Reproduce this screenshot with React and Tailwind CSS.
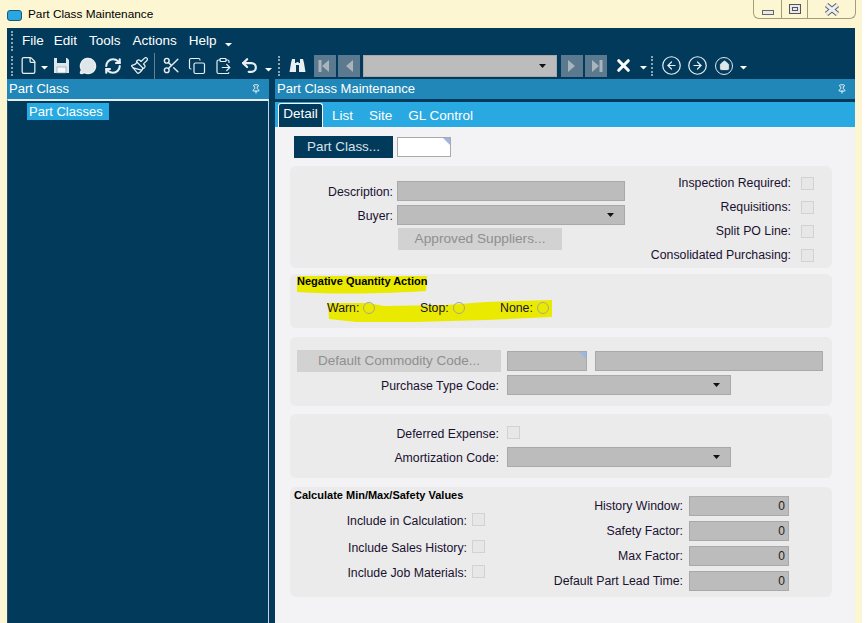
import { File, MessageCircle, RefreshCw, Paintbrush, Scissors, Copy, ClipboardPaste, Undo2, CircleArrowLeft, CircleArrowRight, House, Pin, X } from 'lucide-react';

const Caret = () => (
  <svg width="7" height="5" viewBox="0 0 7 5" className="self-end mb-0.5 shrink-0">
    <path d="M0 1h7L3.5 4.5z" fill="#fff" />
  </svg>
);

const Grip = ({ className = '' }) => (
  <div className={`w-0.5 h-5 shrink-0 border-l-2 border-dotted border-[#8fa3b3] ${className}`}></div>
);

const NavButton = ({ flip, bar }) => (
  <div className="w-[22px] h-[22px] bg-[#5b7a90] flex items-center justify-center shrink-0">
    <svg width="14" height="14" viewBox="0 0 14 14" className={flip ? '-scale-x-100' : ''}>
      <path d="M3 1l7 6-7 6z" fill="#aab4ba" />
      {bar && <rect x="10.5" y="1" width="3" height="12" fill="#aab4ba" />}
    </svg>
  </div>
);

const Check = () => <div className="w-[13px] h-[13px] bg-[#e7e7e7] border border-[#d2d2d2] shrink-0"></div>;

const Label = ({ children, className = '' }) => (
  <span className={`text-[12.3px] leading-none text-[#1a1030] whitespace-nowrap text-right ${className}`}>{children}</span>
);

const Field = ({ className = '', dropdown, value, corner }) => (
  <div className={`relative bg-[#bcbcbc] border border-[#a9a9a9] flex items-center justify-end shrink-0 ${className}`}>
    {dropdown && (
      <svg width="7" height="4" viewBox="0 0 7 4" className="mr-2.5"><path d="M0 0h7L3.5 4z" fill="#111" /></svg>
    )}
    {value && <span className="text-[12px] text-[#222] mr-[3px]">{value}</span>}
    {corner && <div className="absolute top-0 right-0 w-0 h-0 border-t-[7px] border-l-[7px] border-t-[#9db8de] border-l-transparent"></div>}
  </div>
);

const Row = ({ label, width, gap = 'gap-[4px]', className = '', children }) => (
  <div className={`flex items-center ${gap} ${className}`}>
    <div className={`${width} text-right shrink-0 leading-none`}><Label>{label}</Label></div>
    {children}
  </div>
);

const Group = ({ className = '', children }) => (
  <div className={`bg-[#ebebeb] rounded-md ml-[15px] w-[542px] ${className}`}>{children}</div>
);

const Highlight = () => (
  <svg width="270" height="50" viewBox="0 0 270 50" className="absolute left-[6px] -top-[1px] pointer-events-none">
    <path d="M1 3H131L130 18C100 20 50 22 1 19z" fill="#eaea00" />
    <path d="M32 30H72L88 33 150 32 190 29 256 27 256 44 190 47 120 49 60 49 33 46z" fill="#eaea00" />
  </svg>
);

export default function App() {
  return (
    <div className="relative w-[865px] h-[623px] overflow-hidden bg-[#fdf6d2] border-r-[3px] border-white font-['Liberation_Sans',Arial,sans-serif] flex flex-col">
      <div className="h-7 flex shrink-0 justify-between pl-[7px]">
        <div className="flex items-center gap-[6px] pt-0.5">
          <div className="w-[15px] h-[11px] rounded-[3px] bg-[#2aa7df] border border-[#145a85] shrink-0"></div>
          <span className="text-[11.8px] text-black">Part Class Maintenance</span>
        </div>
        <div className="flex h-[19px] mr-[6px] border border-t-0 border-[#a39d7c] rounded-b-md">
          <div className="w-[28px] flex items-center justify-center border-r border-[#a39d7c]">
            <div className="w-[12px] h-[5px] mt-1.5 bg-[#e8e8ee] border border-[#666]"></div>
          </div>
          <div className="w-[26px] flex items-center justify-center border-r border-[#a39d7c]">
            <div className="w-[12px] h-[10px] bg-[#e8e8ee] border border-[#555] flex items-center justify-center">
              <div className="w-[6px] h-[4px] border border-[#555]"></div>
            </div>
          </div>
          <div className="w-[47px] flex items-center justify-center">
            <svg width="16" height="13" viewBox="0 0 16 13">
              <path d="M2.500 2l11 9M13.500 2l-11 9" stroke="#5c6068" strokeWidth="5" />
              <path d="M2.500 2l11 9M13.500 2l-11 9" stroke="#eceef2" strokeWidth="3" />
            </svg>
          </div>
        </div>
      </div>

      <div className="flex-1 ml-[7px] mr-[7px] bg-[#023a5c] flex flex-col min-h-0">
        <div className="h-6 flex items-center pl-1 gap-3 text-white text-[13.5px] shrink-0 pt-0.5">
          <Grip className="h-4 mr-[-3px]" />
          <span>File</span>
          <span className="-ml-0.5">Edit</span>
          <span>Tools</span>
          <span>Actions</span>
          <span>Help</span>
          <div className="-ml-1 h-4 flex"><Caret /></div>
        </div>

        <div className="h-[27px] flex items-center pl-1 text-[#e8eef2] shrink-0">
          <Grip />
          <File size={19} className="ml-[6px] shrink-0" strokeWidth={1.6} />
          <div className="ml-[3px] h-3 flex"><Caret /></div>
          <svg width="17" height="17" viewBox="0 0 17 17" className="ml-[5px] mr-[1px] shrink-0">
            <path d="M1 1h13l2 2v13H1z" fill="#dfe6ea" />
            <rect x="4" y="1" width="9" height="5" fill="#023a5c" />
            <rect x="4" y="10" width="9" height="6" fill="#f6f8f9" stroke="#7d97a8" strokeWidth=".6" />
          </svg>
          <MessageCircle size={18} className="ml-[8px] shrink-0" fill="#dfe6ea" />
          <RefreshCw size={18} className="ml-[7px] shrink-0" strokeWidth={2.8} />
          <Paintbrush size={19} className="ml-[8px] shrink-0" strokeWidth={1.6} />
          <div className="ml-[5px] w-px h-[26px] bg-[#66808f] shrink-0"></div>
          <Scissors size={19} className="ml-[7px] shrink-0" strokeWidth={1.8} />
          <Copy size={18} className="ml-[7px] shrink-0" strokeWidth={1.6} />
          <ClipboardPaste size={18} className="ml-[8px] shrink-0" strokeWidth={1.6} />
          <Undo2 size={19} className="ml-[8px] shrink-0" strokeWidth={2.8} />
          <div className="ml-[6px] h-4 flex"><Caret /></div>
          <Grip className="ml-[6px]" />
          <svg width="17" height="15" viewBox="0 0 17 15" className="ml-[9px] shrink-0">
            <path d="M2 5l1-4h3v4h1.500v-1h2v1H11V1h3l1 4 1.500 9h-6.500V7H7v7H.500z" fill="#e8eef2" />
          </svg>
          <div className="ml-2 flex gap-[2px]">
            <NavButton flip bar />
            <NavButton flip />
          </div>
          <Field dropdown className="ml-[3px] w-[194px] h-[22px]" />
          <div className="ml-[4px] flex gap-[2px]">
            <NavButton />
            <NavButton bar />
          </div>
          <X size={19} className="ml-[7px] text-white shrink-0" strokeWidth={4} />
          <div className="ml-[7px] h-3 flex"><Caret /></div>
          <Grip className="ml-1" />
          <CircleArrowLeft size={21} className="ml-[8px] shrink-0" strokeWidth={1.4} />
          <CircleArrowRight size={21} className="ml-[5px] shrink-0" strokeWidth={1.4} />
          <div className="ml-[7px] w-[18px] h-[18px] rounded-full border border-[#dfe6ea] flex items-center justify-center shrink-0">
            <House size={11} fill="#dfe6ea" strokeWidth={1.6} />
          </div>
          <div className="ml-[7px] h-3 flex"><Caret /></div>
        </div>

        <div className="flex-1 flex min-h-0">
          <div className="w-[262px] shrink-0 flex flex-col">
            <div className="h-5 bg-[#2087b8] text-white text-[13px] flex items-center justify-between pl-[2px] pr-[8px] shrink-0">
              <span>Part Class</span>
              <Pin size={10} strokeWidth={2.2} />
            </div>
            <div className="flex-1 border-t-2 border-t-[#e9eef1] border-r border-r-[#c9d3d9] border-l border-l-[#23506e] pl-[19px] pt-[2px]">
              <div className="w-fit bg-[#29a9e1] text-white text-[13px] leading-[17px] pl-0.5 pr-1.5">Part Classes</div>
            </div>
          </div>

          <div className="ml-[6px] flex-1 flex flex-col min-w-0">
            <div className="h-5 bg-[#2087b8] text-white text-[13px] flex items-center justify-between pl-[2px] pr-[8px] shrink-0">
              <span>Part Class Maintenance</span>
              <Pin size={10} strokeWidth={2.2} />
            </div>
            <div className="h-[25px] mt-[3px] bg-[#29a9e1] flex items-end pl-[3px] text-white text-[13.5px] shrink-0">
              <div className="h-[24px] w-[45px] bg-[#023a5c] border border-b-0 border-white rounded-t-[3px] flex items-center justify-center pb-[3px]">Detail</div>
              <span className="ml-[9px] mb-[1px]">List</span>
              <span className="ml-[16px] mb-[1px]">Site</span>
              <span className="ml-[16px] mb-[1px]">GL Control</span>
            </div>

            <div className="flex-1 bg-[#f3f3f6] flex flex-col min-h-0">
              <div className="flex items-center ml-[19px] mt-[9px] h-[22px] shrink-0">
                <div className="w-[99px] h-[22px] bg-[#023a5c] text-[#d8e2e8] text-[13.4px] flex items-center justify-center">Part Class...</div>
                <div className="relative ml-[4px] w-[54px] h-[20px] bg-white border border-[#a9a9a9]">
                  <div className="absolute top-0 right-0 w-0 h-0 border-t-[7px] border-l-[7px] border-t-[#9db8de] border-l-transparent"></div>
                </div>
              </div>

              <Group className="mt-[8px] h-[102px] shrink-0 flex justify-between pt-[15px]">
                <div className="flex flex-col gap-1">
                  <Row label="Description:" width="w-[103px]"><Field className="w-[228px] h-5" /></Row>
                  <Row label="Buyer:" width="w-[103px]"><Field dropdown className="w-[228px] h-5" /></Row>
                  <div className="ml-[108px] -mt-[1px] w-[164px] h-[22px] bg-[#d2d2d2] text-[#8f8f8f] text-[13.7px] flex items-center justify-center">Approved Suppliers...</div>
                </div>
                <div className="flex flex-col gap-[11px] pr-[18px] items-end -mt-[4px]">
                  {['Inspection Required:', 'Requisitions:', 'Split PO Line:', 'Consolidated Purchasing:'].map((l) => (
                    <div key={l} className="flex items-center gap-[10px] h-[13px]">
                      <Label>{l}</Label>
                      <Check />
                    </div>
                  ))}
                </div>
              </Group>

              <Group className="relative mt-[6px] h-[54px] shrink-0 pl-[7px]">
                <Highlight />
                <div className="relative text-[11px] font-bold text-black leading-[14px]">Negative Quantity Action</div>
                <div className="relative flex items-center mt-[13px] ml-[30px] h-3.5">
                  {['Warn:', 'Stop:', 'None:'].map((l, i) => (
                    <div key={l} className={`flex items-center gap-[4px] ${i === 0 ? 'w-[93px]' : i === 1 ? 'w-[80px]' : ''}`}>
                      <Label>{l}</Label>
                      <div className="w-3 h-3 rounded-full border border-[#a9a98a]"></div>
                    </div>
                  ))}
                </div>
              </Group>

              <Group className="mt-[9px] h-[69px] shrink-0 pt-[13px] pl-[7px]">
                <div className="flex items-center">
                  <div className="w-[204px] h-[22px] bg-[#d2d2d2] text-[#8f8f8f] text-[13.5px] flex items-center justify-center">Default Commodity Code...</div>
                  <Field corner className="ml-[6px] w-[80px] h-5" />
                  <Field className="ml-[8px] w-[228px] h-5" />
                </div>
                <Row label="Purchase Type Code:" width="w-[202px]" gap="gap-[8px]" className="mt-[3px]">
                  <Field dropdown className="w-[224px] h-5" />
                </Row>
              </Group>

              <Group className="mt-[8px] h-[64px] shrink-0 pt-[12px] pl-[7px]">
                <Row label="Deferred Expense:" width="w-[202px]" gap="gap-[8px]" className="h-[13px]"><Check /></Row>
                <Row label="Amortization Code:" width="w-[202px]" gap="gap-[8px]" className="mt-[8px]">
                  <Field dropdown className="w-[224px] h-5" />
                </Row>
              </Group>

              <Group className="mt-[9px] h-[110px] shrink-0 pl-[4px] pt-[1px]">
                <div className="text-[11px] font-bold text-black leading-[14px]">Calculate Min/Max/Safety Values</div>
                <div className="flex justify-between pr-[43px]">
                  <div className="flex flex-col pt-[11px]">
                    <Row label="Include in Calculation:" width="w-[173px]" gap="gap-[5px]" className="h-[13px]"><Check /></Row>
                    <Row label="Include Sales History:" width="w-[173px]" gap="gap-[5px]" className="h-[13px] mt-[14px]"><Check /></Row>
                    <Row label="Include Job Materials:" width="w-[173px]" gap="gap-[5px]" className="h-[13px] mt-3"><Check /></Row>
                  </div>
                  <div className="flex flex-col gap-[5px] -mt-[6px] items-end">
                    {['History Window:', 'Safety Factor:', 'Max Factor:', 'Default Part Lead Time:'].map((l) => (
                      <div key={l} className="flex items-center gap-[6px]">
                        <Label>{l}</Label>
                        <Field value="0" className="w-[100px] h-5" />
                      </div>
                    ))}
                  </div>
                </div>
              </Group>
            </div>
          </div>
        </div>
      </div>
    </div>
  );
}
